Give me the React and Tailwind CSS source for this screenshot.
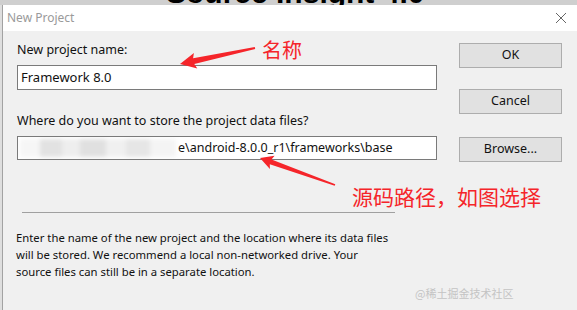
import React from "react";

function Btn({ children, className = "" }) {
  return (
    <div
      className={
        "h-[25px] w-[103px] flex items-center justify-center border border-[#adadad] bg-[#e1e1e1] text-[12.5px] text-[#111] " +
        className
      }
    >
      {children}
    </div>
  );
}

function Arrows() {
  return (
    <svg
      className="absolute left-0 top-0 pointer-events-none"
      width="577"
      height="310"
      viewBox="0 0 577 310"
    >
      <polygon
        fill="#f5252a"
        points="180,64 193.9,52.9 193.1,58.2 254.8,47 255.2,49 194.3,64 197.3,68.5"
      />
      <polygon
        fill="#f5252a"
        points="260,158 274.6,155.8 271.5,159.5 335.3,184.2 334.7,185.8 269.8,164.2 269.9,169"
      />
    </svg>
  );
}

export default function App() {
  return (
    <div className="relative w-[577px] h-[310px] overflow-hidden bg-[#dedede] font-['Noto_Sans',sans-serif]">
      {/* background window strip */}
      <div className="relative h-[5px] overflow-hidden bg-[#cfcfcf]">
        <div className="absolute left-[166px] top-[-22px] text-[30px] leading-[30px] font-bold text-black font-['Liberation_Sans',sans-serif] whitespace-nowrap">
          Source Insight 4.0
        </div>
      </div>
      {/* dialog */}
      <div className="ml-[2px] h-[305px] border-l border-[#a2a2a2] flex flex-col">
        <div className="h-[26px] bg-white flex items-center justify-between pl-[4px] pr-[8px]">
          <span className="text-[12px] text-[#9a9a9a]">New Project</span>
          <svg width="12" height="12" viewBox="0 0 12 12" className="mr-[2px]">
            <path d="M1 1 L11 11 M11 1 L1 11" stroke="#666" strokeWidth="1" />
          </svg>
        </div>
        <div className="flex-1 bg-[#f0f0f0] flex flex-col">
          <div className="flex pl-[14px]">
            <div className="w-[420px] flex flex-col">
              <div className="mt-[11px] h-[16px] text-[12.5px] leading-[16px] text-[#111]">
                New project name:
              </div>
              <div className="mt-[7px] h-[25px] border border-[#7a7a7a] bg-white flex items-center pl-[3px] text-[13px] text-[#111]">
                Framework 8.0
              </div>
              <div className="mt-[23px] h-[16px] text-[12.5px] leading-[16px] text-[#111]">
                Where do you want to store the project data files?
              </div>
              <div className="mt-[7px] h-[24px] border border-[#7a7a7a] bg-white flex items-center overflow-hidden text-[12.5px] text-[#111]">
                <div className="relative w-[160px] h-full shrink-0">
                  <div className="absolute left-[2px] top-[2px] w-[156px] h-[18px] flex blur-[2px]">
                    <div className="w-[20px] bg-[#f6f6f6]" />
                    <div className="w-[22px] bg-[#e2e2e2]" />
                    <div className="w-[18px] bg-[#eeeeee]" />
                    <div className="w-[26px] bg-[#e0e0e0]" />
                    <div className="w-[20px] bg-[#f0f0f0]" />
                    <div className="w-[24px] bg-[#e6e6e6]" />
                    <div className="w-[26px] bg-[#f4f4f4]" />
                  </div>
                </div>
                <span className="whitespace-nowrap">e\android-8.0.0_r1\frameworks\base</span>
              </div>
            </div>
            <div className="ml-[22px] flex flex-col">
              <Btn className="mt-[12px]">OK</Btn>
              <Btn className="mt-[21px]">Cancel</Btn>
              <Btn className="mt-[23px]">Browse...</Btn>
            </div>
          </div>
          <div className="ml-[19px] mt-[50px] w-[373px] h-px bg-[#a0a0a0]" />
          <div className="ml-[13px] mt-[16px] w-[400px] text-[11.3px] leading-[17px] text-[#111]">
            Enter the name of the new project and the location where its data files
            <br />
            will be stored. We recommend a local non-networked drive. Your
            <br />
            source files can still be in a separate location.
          </div>
        </div>
      </div>
      <Arrows />
      <div className="absolute left-[262px] top-[37px] text-[20px] leading-[26px] text-[#f5252a] font-['Noto_Sans_CJK_SC',sans-serif]">
        名称
      </div>
      <div className="absolute left-[352px] top-[183px] text-[21px] leading-[26px] text-[#f5252a] font-['Noto_Sans_CJK_SC',sans-serif] whitespace-nowrap">
        源码路径，如图选择
      </div>
      <div className="absolute left-[415px] top-[285px] text-[11px] leading-[16px] text-[#c4c4c4] font-['Noto_Sans_CJK_SC',sans-serif] whitespace-nowrap">
        @稀土掘金技术社区
      </div>
    </div>
  );
}
